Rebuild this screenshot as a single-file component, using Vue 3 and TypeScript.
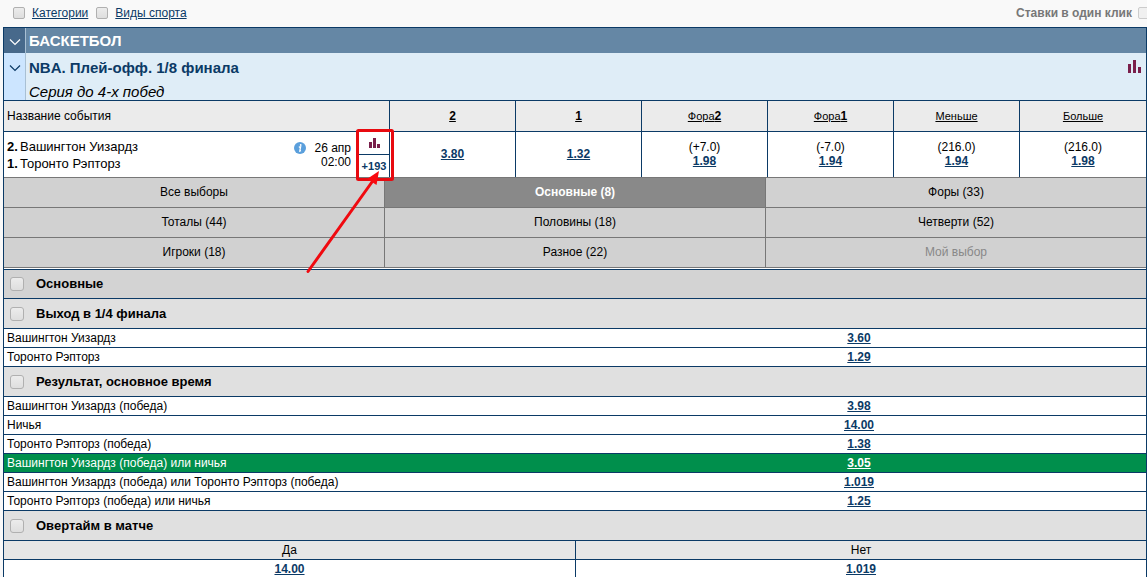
<script setup lang="ts">
import { ref } from 'vue'

interface Column {
  text: string
  strong: string
  total: string
  price: string
}

interface Market {
  title: string
  rows: { name: string; price: string; picked?: boolean }[]
}

const columns: Column[] = [
  { text: '', strong: '2', total: '', price: '3.80' },
  { text: '', strong: '1', total: '', price: '1.32' },
  { text: 'Фора', strong: '2', total: '(+7.0)', price: '1.98' },
  { text: 'Фора', strong: '1', total: '(-7.0)', price: '1.94' },
  { text: 'Меньше', strong: '', total: '(216.0)', price: '1.94' },
  { text: 'Больше', strong: '', total: '(216.0)', price: '1.98' },
]

const tabs: string[] = [
  'Все выборы',
  'Основные (8)',
  'Форы (33)',
  'Тоталы (44)',
  'Половины (18)',
  'Четверти (52)',
  'Игроки (18)',
  'Разное (22)',
  'Мой выбор',
]
const activeTab = ref(1)

const markets: Market[] = [
  {
    title: 'Выход в 1/4 финала',
    rows: [
      { name: 'Вашингтон Уизардз', price: '3.60' },
      { name: 'Торонто Рэпторз', price: '1.29' },
    ],
  },
  {
    title: 'Результат, основное время',
    rows: [
      { name: 'Вашингтон Уизардз (победа)', price: '3.98' },
      { name: 'Ничья', price: '14.00' },
      { name: 'Торонто Рэпторз (победа)', price: '1.38' },
      { name: 'Вашингтон Уизардз (победа) или ничья', price: '3.05', picked: true },
      { name: 'Вашингтон Уизардз (победа) или Торонто Рэпторз (победа)', price: '1.019' },
      { name: 'Торонто Рэпторз (победа) или ничья', price: '1.25' },
    ],
  },
]
</script>

<template>
  <main class="page">
    <div class="toolbar">
      <input id="categories" class="check small" type="checkbox" aria-label="Категории" />
      <a class="filter" href="#categories">Категории</a>
      <input id="sports" class="check small" type="checkbox" aria-label="Виды спорта" />
      <a class="filter" href="#sports">Виды спорта</a>
      <label class="one-click" for="one-click">Ставки в один клик</label>
      <input id="one-click" class="check small pale" type="checkbox" />
    </div>

    <div class="board">
      <div class="sport">
        <button class="toggle" type="button" aria-label="Свернуть вид спорта">
          <svg width="12" height="8" viewBox="0 0 12 8"><path d="M1 1.5 L6 6.5 L11 1.5" /></svg>
        </button>
        <h1>БАСКЕТБОЛ</h1>
      </div>

      <div class="league">
        <button class="toggle" type="button" aria-label="Свернуть турнир">
          <svg width="12" height="8" viewBox="0 0 12 8"><path d="M1 1.5 L6 6.5 L11 1.5" /></svg>
        </button>
        <div class="league-text">
          <h2>NBA. Плей-офф. 1/8 финала</h2>
          <p>Серия до 4-х побед</p>
        </div>
        <a class="league-stats" href="#stats" aria-label="Статистика турнира">
          <svg width="13" height="13" viewBox="0 0 13 13">
            <path d="M0 4h3v9H0zM5 0h3v13H5zM10 7h3v6h-3z" />
          </svg>
        </a>
      </div>

      <table class="event">
        <thead>
          <tr>
            <th class="event-name" scope="col">Название события</th>
            <th v-for="(c, i) in columns" :key="i" class="odds" scope="col">
              <a :href="'#col' + i" :class="{ compact: c.text }">{{ c.text }}<b v-if="c.strong">{{ c.strong }}</b></a>
            </th>
          </tr>
        </thead>
        <tbody>
          <tr>
            <td class="event-name">
              <div class="match">
                <div class="teams">
                  <div class="team"><b>2.</b><span>Вашингтон Уизардз</span></div>
                  <div class="team"><b>1.</b><span>Торонто Рэпторз</span></div>
                </div>
                <svg class="info" width="12" height="12" viewBox="0 0 12 12">
                  <circle cx="6" cy="6" r="6" fill="#5a9fdc" />
                  <circle cx="6.7" cy="3" r="0.9" fill="#fff" />
                  <path d="M4.8 5.2 L6.6 4.9 L5.8 9 L7 8.6" fill="none" stroke="#fff" stroke-width="1.3" />
                </svg>
                <div class="date">26 апр<br />02:00</div>
                <div class="extra">
                  <a class="extra-stats" href="#match-stats" aria-label="Статистика матча">
                    <svg width="11" height="10" viewBox="0 0 11 10">
                      <path d="M0 4h3v6H0zM4 0h3v10H4zM8 6h3v4H8z" />
                    </svg>
                  </a>
                  <a class="extra-count" href="#more">+193</a>
                  <svg class="pointer" width="90" height="146" viewBox="0 0 90 146">
                    <rect x="53.5" y="2.5" width="35" height="49" rx="1" fill="none" stroke="#e80a10" stroke-width="3" />
                    <path d="M4 143.5 L68 54" fill="none" stroke="#f00a10" stroke-width="3" stroke-linecap="round" />
                    <path d="M75 43 L72.5 57 L68 54 L63 51 Z" fill="#f90a10" />
                  </svg>
                </div>
              </div>
            </td>
            <td v-for="(c, i) in columns" :key="i" class="odds">
              <div v-if="c.total">{{ c.total }}</div>
              <a class="price" :href="'#bet' + i">{{ c.price }}</a>
            </td>
          </tr>
        </tbody>
      </table>

      <div class="tabs">
        <button
          v-for="(t, i) in tabs"
          :key="t"
          type="button"
          :class="{ active: i === activeTab }"
          :disabled="i === 8"
          @click="activeTab = i"
        >{{ t }}</button>
      </div>

      <h3 class="group main-group">
        <input id="group-main" class="check" type="checkbox" />
        <label for="group-main">Основные</label>
      </h3>

      <section v-for="(m, k) in markets" :key="m.title">
        <h3 class="group">
          <input :id="'group-' + k" class="check" type="checkbox" />
          <label :for="'group-' + k">{{ m.title }}</label>
        </h3>
        <table class="market">
          <tbody>
            <tr v-for="r in m.rows" :key="r.name" :class="{ picked: r.picked }">
              <td class="outcome">{{ r.name }}</td>
              <td class="outcome-price"><a class="price" href="#bet">{{ r.price }}</a></td>
            </tr>
          </tbody>
        </table>
      </section>

      <section>
        <h3 class="group">
          <input id="group-overtime" class="check" type="checkbox" />
          <label for="group-overtime">Овертайм в матче</label>
        </h3>
        <table class="market split">
          <thead>
            <tr><th scope="col">Да</th><th scope="col">Нет</th></tr>
          </thead>
          <tbody>
            <tr>
              <td><a class="price" href="#yes">14.00</a></td>
              <td><a class="price" href="#no">1.019</a></td>
            </tr>
          </tbody>
        </table>
      </section>
    </div>
  </main>
</template>

<style>
body {
  background: #f9f9f9;
  overflow: hidden;
}
</style>

<style scoped>
.page {
  box-sizing: border-box;
  padding-left: 3px;
  overflow: hidden;
  color: #000;
  font: 12px/14px "Liberation Sans", Arial, sans-serif;
}
h1, h2, h3, p { margin: 0; }
button { border: 0; padding: 0; font: inherit; color: inherit; }
table { width: 100%; border-spacing: 0; table-layout: fixed; }
th, td { padding: 0; font-weight: normal; text-align: center; }

.toolbar {
  box-sizing: border-box;
  display: flex;
  align-items: center;
  height: 27px;
  margin-right: -3px;
  padding: 0 0 1px 10px;
}
.filter { margin: 0 8px 0 7px; color: #0b3a66; }
.one-click { margin: 0 6px 0 auto; color: #777; font-weight: bold; }
.check {
  appearance: none;
  box-sizing: border-box;
  flex: none;
  width: 14px;
  height: 14px;
  margin: 0;
  border: 1px solid #b0b0b0;
  border-radius: 3px;
  background: linear-gradient(#ececec, #dedede);
}
.check.small { width: 12px; height: 12px; border-radius: 2px; }
.check.pale { border-color: #ccc; background: #f0f0f0; }

.board { border: 1px solid #0b3a66; border-bottom: 0; background: #fff; }
.sport, .league { display: flex; }
.sport { height: 25px; background: #6587a5; color: #fff; }
.league { height: 47px; background: #dfedf7; border-bottom: 1px solid #0b3a66; }
.toggle {
  box-sizing: border-box;
  display: flex;
  justify-content: center;
  width: 22px;
  padding-top: 11px;
  border-right: 1px solid #a9c0d4;
}
.toggle path { fill: none; stroke: currentColor; stroke-width: 1.2; }
.sport .toggle { padding-top: 10px; background: #47698b; color: #fff; }
.league .toggle { background: #cce5ff; color: #0b3a66; }
.sport h1 { padding-left: 3px; font-size: 15px; line-height: 26px; }
.league-text { flex: 1; padding-left: 3px; }
.league h2 { color: #0b3a66; font-size: 15px; line-height: 30px; }
.league p { font-size: 15px; font-style: italic; line-height: 17px; }
.league-stats { padding: 7px 5px 0 0; }
.league-stats path, .extra-stats path { fill: #7a1f4b; }

.event th, .event td { border-right: 1px solid #0b3a66; }
.event th:last-child, .event td:last-child { border-right: 0; }
.event th { height: 30px; background: #ebebeb; border-bottom: 1px solid #0b3a66; }
.event th a { color: #000; }
.event th a.compact { font-size: 11px; }
.event th a.compact b { font-size: 12px; }
.event .odds { width: 125px; }
.event .odds:last-child { width: 126px; }
.event td.odds { padding-bottom: 2px; }
.event th.event-name { padding-left: 3px; text-align: left; }
.match { display: flex; height: 45px; padding-left: 3px; text-align: left; }
.teams { flex: 1; padding-top: 6px; font-size: 13px; line-height: 17px; }
.team { display: flex; }
.team b { width: 13px; }
.info { margin: 10px 8px 0 0; }
.date { padding: 9px 7px 0 0; text-align: right; }
.extra { position: relative; display: flex; flex-direction: column; width: 30px; border-left: 1px solid #0b3a66; }
.extra a { display: flex; flex: 1; align-items: center; justify-content: center; }
.extra-stats { border-bottom: 1px solid #0b3a66; }
.extra-count { color: #0b3a66; font-size: 11px; font-weight: bold; text-decoration: none; }
.pointer { position: absolute; left: -55px; top: -4px; z-index: 1; pointer-events: none; }

.price { color: #0b3a66; font-weight: bold; }

.tabs {
  display: grid;
  grid-template-columns: repeat(3, 1fr);
  gap: 1px;
  border: solid #777;
  border-width: 1px 0;
  background: #777;
}
.tabs button { height: 29px; padding-bottom: 2px; background: #d1d1d1; }
.tabs .active { background: #898989; color: #fff; font-weight: bold; }
.tabs :disabled { color: #888; }

.group {
  display: flex;
  align-items: center;
  gap: 12px;
  height: 29px;
  padding-left: 6px;
  background: #e0e0e0;
  border-bottom: 1px solid #0b3a66;
  font-size: 13px;
}
.main-group { height: 28px; margin-top: 1px; border-top: 1px solid #0b3a66; background: #d3d3d3; }
.market th, .market td { height: 18px; border-bottom: 1px solid #0b3a66; }
.market .outcome { padding-left: 3px; text-align: left; white-space: nowrap; }
.market .outcome-price { padding-right: 3px; }
.market .picked { background: #008f4c; color: #fff; }
.picked .price { color: #fff; }
.split th { background: #e6e6e6; }
.split th:last-child, .split td:last-child { border-left: 1px solid #0b3a66; }
</style>
